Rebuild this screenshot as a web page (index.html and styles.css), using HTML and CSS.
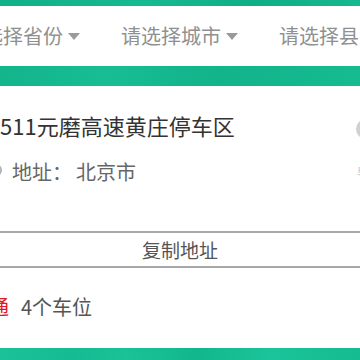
FILE: index.html
```html
<!DOCTYPE html>
<html lang="zh-CN">
<head>
<meta charset="utf-8">
<link rel="stylesheet" href="styles.css">
</head>
<body>
<div class="page">
  <div class="band band-top"></div>
  <div class="filter-bar">
    <div class="filter"><span>请选择省份</span><span class="caret"></span></div>
    <div class="filter"><span>请选择城市</span><span class="caret"></span></div>
    <div class="filter"><span>请选择县区</span><span class="caret"></span></div>
  </div>
  <div class="band band-mid"></div>
  <div class="card">
    <div class="info">
      <div class="info-main">
        <div class="title">511元磨高速黄庄停车区</div>
        <div class="address">
          <svg class="pin" width="14" height="16" viewBox="0 0 14 16"><path d="M7 0a6 6 0 0 1 6 6c0 4-6 10-6 10S1 10 1 6a6 6 0 0 1 6-6z" fill="#b5b5b5"/></svg>
          <span>地址：</span><span class="city">北京市</span>
        </div>
      </div>
      <div class="nav">
        <svg width="22" height="22" viewBox="0 0 22 22"><circle cx="11" cy="11" r="10" fill="#d0d0d0"/></svg>
        <span class="nav-label">导航</span>
      </div>
    </div>
    <div class="copy">复制地址</div>
    <div class="meta">
      <span class="tag">普通</span>
      <span class="spots">4个车位</span>
    </div>
  </div>
  <div class="band band-bottom"></div>
</div>
</body>
</html>
```
FILE: styles.css
```css
html, body {
  margin: 0;
  padding: 0;
  background: #ffffff;
}
body {
  font-family: "Noto Sans CJK SC", "Noto Sans", sans-serif;
  overflow: hidden;
}
.page {
  width: 360px;
  height: 360px;
  overflow: hidden;
  display: flex;
  flex-direction: column;
}
.band {
  flex: none;
}
.band-top {
  height: 6px;
  background: linear-gradient(90deg, #10b088 0%, #16ba8f 40%, #0fae86 70%, #15b98e 100%);
}
.band-mid {
  height: 20px;
  background: linear-gradient(90deg, #13b58b 0%, #18bd93 30%, #12b48a 60%, #16bb90 100%);
}
.band-bottom {
  flex: 1;
  background: linear-gradient(90deg, #1bc299 0%, #15bb92 20%, #1ac298 35%, #12b68c 55%, #1bc49a 75%, #15bb91 100%);
}
.filter-bar {
  height: 60px;
  display: flex;
  align-items: center;
  margin-left: -37px;
  gap: 41px;
  white-space: nowrap;
  flex: none;
}
.filter {
  display: flex;
  align-items: center;
  font-size: 20px;
  line-height: 28px;
  color: #909090;
  flex: none;
}
.caret {
  width: 0;
  height: 0;
  margin-left: 5px;
  border-left: 6.5px solid transparent;
  border-right: 6.5px solid transparent;
  border-top: 7px solid #9a9a9a;
}
.card {
  padding: 24px 0 27px;
  flex: none;
}
.info {
  display: flex;
  justify-content: space-between;
}
.info-main {
  display: flex;
  flex-direction: column;
  gap: 18px;
}
.title {
  font-size: 22px;
  line-height: 30px;
  color: #333333;
  white-space: nowrap;
}
.address {
  display: flex;
  align-items: center;
  font-size: 20px;
  line-height: 28px;
  color: #666666;
  margin-left: -11px;
  white-space: nowrap;
}
.pin {
  margin-right: 9px;
}
.city {
  margin-left: 4px;
}
.nav {
  display: flex;
  flex-direction: column;
  align-items: flex-start;
  margin-right: -27px;
  padding-top: 8px;
  gap: 26px;
  width: 32px;
}
.nav-label {
  font-size: 12px;
  line-height: 14px;
  color: #c8c8c8;
  white-space: nowrap;
  margin-left: 2px;
}
.copy {
  margin-top: 45px;
  border-top: 2px solid #a8a8a8;
  border-bottom: 2px solid #a8a8a8;
  height: 33px;
  line-height: 33px;
  text-align: center;
  font-size: 19px;
  color: #555555;
}
.meta {
  margin-top: 25px;
  display: flex;
  align-items: center;
  line-height: 28px;
  white-space: nowrap;
  margin-left: -31px;
}
.tag {
  font-size: 20px;
  color: #e01b1b;
  margin-right: 12px;
}
.spots {
  font-size: 20px;
  color: #555555;
}
```
